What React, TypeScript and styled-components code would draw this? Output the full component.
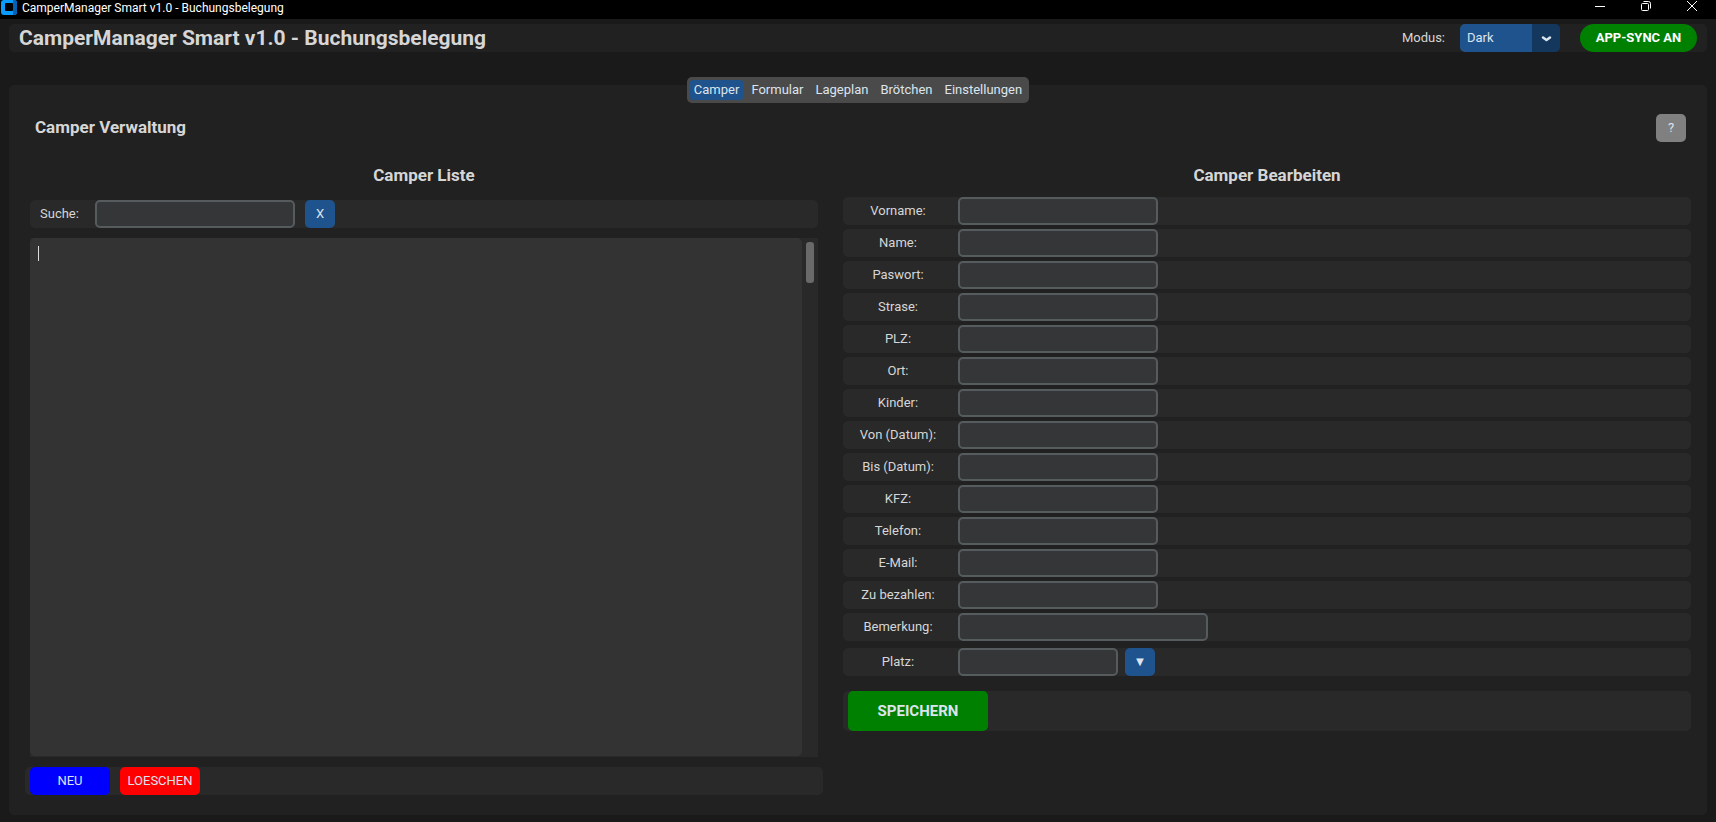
import React, { useState } from "react";
import styled, { createGlobalStyle } from "styled-components";

const GlobalStyle = createGlobalStyle`
  *, *::before, *::after { box-sizing: border-box; }
  body {
    margin: 0;
    background: #1a1a1a;
    color: #d6d6d6;
    font: 13px/20px Roboto, "Liberation Sans", sans-serif;
  }
  button, input, select, textarea { font: inherit; color: #dce4ee; }
`;

const Window = styled.div`
  display: flex;
  flex-direction: column;
  min-height: 100vh;
`;

const TitleBar = styled.div`
  display: flex;
  align-items: flex-start;
  justify-content: space-between;
  height: 19px;
  padding: 0 1px;
  background: #000;
  color: #fff;
`;

const WindowName = styled.div`
  display: flex;
  gap: 5px;
  font-size: 12px;
  line-height: 16px;
`;

const WindowControls = styled.div`
  display: flex;
`;

const WindowButton = styled.button`
  display: flex;
  justify-content: center;
  width: 46px;
  height: 16px;
  padding: 0;
  border: 0;
  background: none;
`;

const Header = styled.header`
  display: flex;
  align-items: center;
  height: 28px;
  margin: 5px 9px 0;
  padding: 0 10px;
  border-radius: 5px;
  background: #212121;
`;

const AppTitle = styled.h1`
  flex: 1;
  margin: 0;
  font-size: 21px;
  line-height: 28px;
  font-weight: 700;
`;

const ModeLabel = styled.label`
  margin-right: 15px;
`;

const ModePicker = styled.div`
  position: relative;
  width: 100px;
  height: 28px;
  margin-right: 20px;
`;

const ModeSelect = styled.select`
  width: 100%;
  height: 100%;
  padding: 0 28px 0 7px;
  border: 0;
  border-radius: 5px;
  appearance: none;
  background: linear-gradient(to right, #1f538d 72px, #14375e 72px);
`;

const ModeArrow = styled.svg`
  position: absolute;
  top: 11px;
  right: 8px;
  pointer-events: none;
`;

type Tone = "blue" | "green" | "gray" | "new" | "delete";

const tones: Record<Tone, string> = {
  blue: "#1f538d",
  green: "#008000",
  gray: "#808080",
  new: "#0000ff",
  delete: "#ff0000",
};

const Button = styled.button<{ $tone: Tone; $width: number }>`
  width: ${(p) => p.$width}px;
  height: 28px;
  padding: 0;
  border: 0;
  border-radius: 5px;
  background: ${(p) => tones[p.$tone]};
  line-height: 28px;
`;

const SyncButton = styled(Button)`
  border-radius: 14px;
  color: #fff;
  font-weight: 700;
`;

const SaveButton = styled(Button)`
  height: 40px;
  font-size: 15px;
  font-weight: 700;
`;

const Main = styled.main`
  display: flex;
  flex: 1;
  flex-direction: column;
  margin: 33px 9px 7px;
  padding: 0 16px 20px;
  border-radius: 5px;
  background: #212121;
`;

const Tabs = styled.nav`
  display: flex;
  align-self: center;
  gap: 4px;
  height: 26px;
  margin-top: -8px;
  padding: 3px;
  border-radius: 5px;
  background: #4a4a4a;
`;

const Tab = styled.button<{ $active: boolean }>`
  padding: 0 4px;
  border: 0;
  border-radius: 3px;
  background: ${(p) => (p.$active ? "#1f538d" : "transparent")};
  line-height: 20px;
`;

const PageHead = styled.div`
  display: flex;
  align-items: flex-start;
  justify-content: space-between;
  margin-top: 11px;
  padding: 0 5px 0 10px;
`;

const Heading = styled.h2`
  margin: 0;
  font-size: 17px;
  line-height: 28px;
  font-weight: 700;
`;

const PageHeading = styled(Heading)`
  line-height: 26px;
`;

const SectionHeading = styled(Heading)`
  text-align: center;
`;

const Columns = styled.div`
  display: grid;
  flex: 1;
  grid-template-columns: 798fr 848fr;
  gap: 20px;
  margin-top: 19px;
`;

const ListColumn = styled.section`
  display: flex;
  flex-direction: column;
`;

const Bar = styled.div`
  display: flex;
  align-items: center;
  border-radius: 5px;
  background: #292929;
`;

const SearchBar = styled(Bar)`
  margin: 11px 5px 0;
  padding-left: 10px;
`;

const SearchLabel = styled.label`
  width: 55px;
`;

const Input = styled.input<{ $width: number }>`
  width: ${(p) => p.$width}px;
  height: 28px;
  padding: 0 6px;
  border: 2px solid #565b5e;
  border-radius: 5px;
  background: #343638;
`;

const SearchInput = styled(Input)`
  margin-right: 10px;
`;

const ListBox = styled.div`
  position: relative;
  display: flex;
  flex: 1;
  margin: 10px 5px;
  background: #292929;
`;

const ListText = styled.textarea`
  flex: 1;
  margin-bottom: 1px;
  padding: 6px 8px;
  border: 0;
  border-radius: 5px;
  background: #333;
  resize: none;
`;

const Caret = styled.span`
  position: absolute;
  top: 8px;
  left: 8px;
  width: 1px;
  height: 15px;
  background: #dcdcdc;
`;

const ScrollTrack = styled.div`
  width: 16px;
  padding: 4px;
`;

const ScrollThumb = styled.div`
  height: 41px;
  border-radius: 3px;
  background: #696969;
`;

const ListActions = styled(Bar)`
  gap: 10px;
  padding-left: 5px;
`;

const Form = styled.form`
  display: flex;
  flex-direction: column;
`;

const Fields = styled.div`
  display: flex;
  flex-direction: column;
  gap: 4px;
  margin-top: 8px;
`;

const FieldRow = styled(Bar)`
  padding-left: 5px;
`;

const FieldLabel = styled.label`
  width: 100px;
  margin-right: 10px;
  text-align: center;
`;

const PlaceRow = styled(FieldRow)`
  margin-top: 7px;
`;

const PlaceInput = styled(Input)`
  margin-right: 7px;
`;

const SaveRow = styled(FieldRow)`
  margin-top: 15px;
`;

const TABS = ["Camper", "Formular", "Lageplan", "Brötchen", "Einstellungen"];

const FIELDS = [
  { id: "vorname", label: "Vorname:" },
  { id: "name", label: "Name:" },
  { id: "paswort", label: "Paswort:" },
  { id: "strase", label: "Strase:" },
  { id: "plz", label: "PLZ:" },
  { id: "ort", label: "Ort:" },
  { id: "kinder", label: "Kinder:" },
  { id: "von", label: "Von (Datum):" },
  { id: "bis", label: "Bis (Datum):" },
  { id: "kfz", label: "KFZ:" },
  { id: "telefon", label: "Telefon:" },
  { id: "email", label: "E-Mail:" },
  { id: "betrag", label: "Zu bezahlen:" },
  { id: "bemerkung", label: "Bemerkung:", width: 250 },
];

const APP_NAME = "CamperManager Smart v1.0 - Buchungsbelegung";

function AppLogo() {
  return (
    <svg width="16" height="16" viewBox="0 0 16 16" aria-hidden="true">
      <path d="M3 0h10a3 3 0 0 1 3 3v9a3 3 0 0 1-3 3H3a3 3 0 0 1-3-3V3a3 3 0 0 1 3-3z" fill="#0a9bff" />
      <path d="M12 0h1a3 3 0 0 1 3 3v9a3 3 0 0 1-3 3h-1z" fill="#0561b0" />
      <rect x="4" y="3" width="8" height="8" rx="1" fill="#000" />
    </svg>
  );
}

export default function App() {
  const [tab, setTab] = useState("Camper");
  const [query, setQuery] = useState("");

  return (
    <Window>
      <GlobalStyle />
      <TitleBar>
        <WindowName>
          <AppLogo />
          {APP_NAME}
        </WindowName>
        <WindowControls>
          <WindowButton aria-label="Minimieren">
            <svg width="12" height="12" viewBox="0 0 12 12">
              <path d="M1 6.5h10" stroke="#fff" />
            </svg>
          </WindowButton>
          <WindowButton aria-label="Verkleinern">
            <svg width="12" height="12" viewBox="0 0 12 12" fill="none" stroke="#fff">
              <rect x="1.5" y="3.5" width="7" height="7" rx="1" />
              <path d="M3.5 1.5h5a2 2 0 0 1 2 2v5" />
            </svg>
          </WindowButton>
          <WindowButton aria-label="Schließen">
            <svg width="12" height="12" viewBox="0 0 12 12" stroke="#fff">
              <path d="M1 1l10 10M11 1L1 11" />
            </svg>
          </WindowButton>
        </WindowControls>
      </TitleBar>

      <Header>
        <AppTitle>{APP_NAME}</AppTitle>
        <ModeLabel htmlFor="modus">Modus:</ModeLabel>
        <ModePicker>
          <ModeSelect id="modus" defaultValue="Dark">
            <option>Dark</option>
            <option>Light</option>
            <option>System</option>
          </ModeSelect>
          <ModeArrow width="11" height="8" viewBox="0 0 11 8" fill="none">
            <path d="M2 2.5L5.500 5L9 2.500" stroke="#dce4ee" strokeWidth="2.5" strokeLinecap="round" strokeLinejoin="round" />
          </ModeArrow>
        </ModePicker>
        <SyncButton $tone="green" $width={117}>APP-SYNC AN</SyncButton>
      </Header>

      <Main>
        <Tabs>
          {TABS.map((name) => (
            <Tab key={name} $active={name === tab} onClick={() => setTab(name)}>
              {name}
            </Tab>
          ))}
        </Tabs>

        <PageHead>
          <PageHeading>Camper Verwaltung</PageHeading>
          <Button $tone="gray" $width={30}>?</Button>
        </PageHead>

        <Columns>
          <ListColumn>
            <SectionHeading>Camper Liste</SectionHeading>
            <SearchBar>
              <SearchLabel htmlFor="suche">Suche:</SearchLabel>
              <SearchInput id="suche" $width={200} value={query} onChange={(e) => setQuery(e.target.value)} />
              <Button $tone="blue" $width={30} onClick={() => setQuery("")}>X</Button>
            </SearchBar>
            <ListBox>
              <ListText aria-label="Camper Liste" />
              <Caret />
              <ScrollTrack>
                <ScrollThumb />
              </ScrollTrack>
            </ListBox>
            <ListActions>
              <Button $tone="new" $width={80}>NEU</Button>
              <Button $tone="delete" $width={80}>LOESCHEN</Button>
            </ListActions>
          </ListColumn>

          <Form onSubmit={(e) => e.preventDefault()}>
            <SectionHeading>Camper Bearbeiten</SectionHeading>
            <Fields>
              {FIELDS.map((f) => (
                <FieldRow key={f.id}>
                  <FieldLabel htmlFor={f.id}>{f.label}</FieldLabel>
                  <Input id={f.id} $width={f.width ?? 200} />
                </FieldRow>
              ))}
            </Fields>
            <PlaceRow>
              <FieldLabel htmlFor="platz">Platz:</FieldLabel>
              <PlaceInput id="platz" $width={160} />
              <Button type="button" $tone="blue" $width={30} aria-label="Platz wählen">▼</Button>
            </PlaceRow>
            <SaveRow>
              <SaveButton type="submit" $tone="green" $width={140}>SPEICHERN</SaveButton>
            </SaveRow>
          </Form>
        </Columns>
      </Main>
    </Window>
  );
}
